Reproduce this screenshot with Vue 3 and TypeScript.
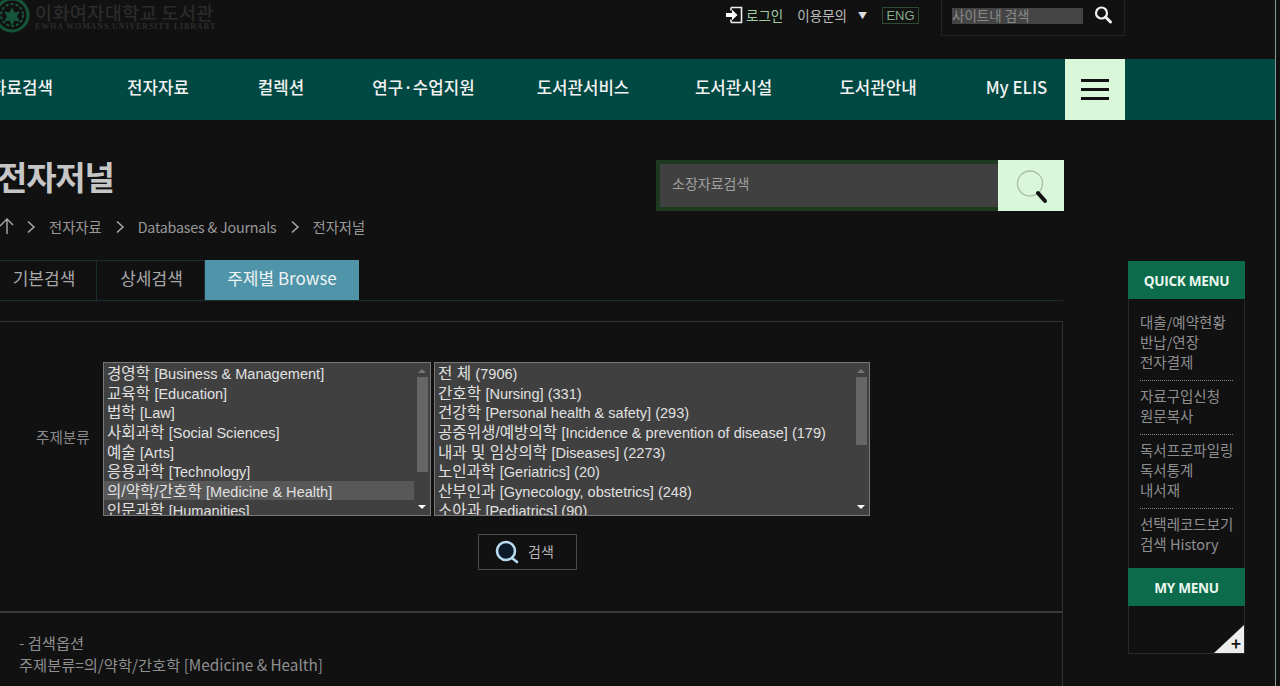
<script setup lang="ts">
const navItems: string[] = ['자료검색', '전자자료', '컬렉션', '연구·수업지원', '도서관서비스', '도서관시설', '도서관안내', 'My ELIS']
const subjects: string[] = ['경영학 [Business & Management]', '교육학 [Education]', '법학 [Law]', '사회과학 [Social Sciences]', '예술 [Arts]', '응용과학 [Technology]', '의/약학/간호학 [Medicine & Health]', '인문과학 [Humanities]']
const details: string[] = ['전 체 (7906)', '간호학 [Nursing] (331)', '건강학 [Personal health & safety] (293)', '공중위생/예방의학 [Incidence & prevention of disease] (179)', '내과 및 임상의학 [Diseases] (2273)', '노인과학 [Geriatrics] (20)', '산부인과 [Gynecology, obstetrics] (248)', '소아과 [Pediatrics] (90)']
const quickGroups: string[][] = [['대출/예약현황', '반납/연장', '전자결제'], ['자료구입신청', '원문복사'], ['독서프로파일링', '독서통계', '내서재'], ['선택레코드보기', '검색 History']]
function ko(s: string): string {
  return s.slice(0, s.search(/[\[(]/))
}
function latin(s: string): string {
  return s.slice(s.search(/[\[(]/))
}
</script>

<template>
  <div class="viewport">
    <div class="page">
      <header class="topbar">
        <div class="logo">
          <svg class="logo-mark" width="36" height="36" viewBox="0 0 36 36">
            <circle cx="18" cy="18" r="16" fill="none" stroke="#17553b" stroke-width="3" />
            <circle cx="18" cy="18" r="11" fill="none" stroke="#17553b" stroke-width="2" stroke-dasharray="3 2" />
            <path d="M18 10l2.500 5.500 5.500-1-3 5 3 5-5.500-1-2.500 5.500-2.500-5.500-5.500 1 3-5-3-5 5.500 1z" fill="#17553b" />
          </svg>
          <div class="logo-text">
            <div class="logo-ko">이화여자대학교 도서관</div>
            <div class="logo-en">EWHA WOMANS UNIVERSITY LIBRARY</div>
          </div>
        </div>
        <div class="util">
          <svg class="login-icon" width="18" height="18" viewBox="0 0 18 18">
            <path d="M6 1.500h10.500v15H6M6 1.500v3M6 16.500v-3" fill="none" stroke="#eee" stroke-width="1.600" />
            <path d="M1 7h6V3.800L12.500 9 7 14.200V11H1z" fill="#fff" />
          </svg>
          <span class="login">로그인</span>
          <span class="inquiry">이용문의</span>
          <span class="caret">▼</span>
          <span class="eng">ENG</span>
        </div>
        <div class="site-search">
          <div class="site-input">사이트내 검색</div>
          <svg width="20" height="20" viewBox="0 0 20 20">
            <circle cx="8.500" cy="8" r="5.500" fill="none" stroke="#f0f0f0" stroke-width="2.200" />
            <path d="M12.500 12l5 5" stroke="#f0f0f0" stroke-width="3" stroke-linecap="round" />
          </svg>
        </div>
      </header>

      <nav class="nav">
        <div class="nav-grid">
          <a v-for="item in navItems" :key="item" class="nav-item">{{ item }}</a>
          <div class="burger"><i></i><i></i><i></i></div>
        </div>
      </nav>

      <div class="body">
        <main class="content">
          <div class="head">
            <div>
              <h1 class="title">전자저널</h1>
              <div class="crumbs">
                <svg class="home" width="18" height="18" viewBox="0 0 18 18"><path d="M2 8l7-7 6 6M9 1.500V16" fill="none" stroke="#aaa" stroke-width="1.400" /></svg>
                <svg class="chev" width="10" height="14" viewBox="0 0 10 14"><path d="M2 1.500l6 5.500-6 5.500" fill="none" stroke="#aaa" stroke-width="1.500" /></svg>
                <span>전자자료</span>
                <svg class="chev" width="10" height="14" viewBox="0 0 10 14"><path d="M2 1.500l6 5.500-6 5.500" fill="none" stroke="#aaa" stroke-width="1.500" /></svg>
                <span class="crumb-latin">Databases &amp; Journals</span>
                <svg class="chev" width="10" height="14" viewBox="0 0 10 14"><path d="M2 1.500l6 5.500-6 5.500" fill="none" stroke="#aaa" stroke-width="1.500" /></svg>
                <span>전자저널</span>
              </div>
            </div>
            <div class="holdings">
              <div class="holdings-input">소장자료검색</div>
              <div class="holdings-btn">
                <svg width="38" height="38" viewBox="0 0 38 38">
                  <circle cx="18" cy="16.500" r="12.500" fill="none" stroke="#a9bba9" stroke-width="1.300" />
                  <path d="M26 26l7 8" stroke="#111" stroke-width="4" stroke-linecap="round" />
                </svg>
              </div>
            </div>
          </div>

          <div class="tabs">
            <div class="tab tab-first">기본검색</div>
            <div class="tab tab-second">상세검색</div>
            <div class="tab tab-active">주제별 Browse</div>
          </div>

          <section class="panel">
            <div class="form-row">
              <label class="form-label">주제분류</label>
              <div class="listbox listbox-left">
                <ul class="options">
                  <li v-for="s in subjects" :key="s" :class="{ selected: s.startsWith('의/약학') }"><span class="opt-ko">{{ ko(s) }}</span>{{ latin(s) }}</li>
                </ul>
                <div class="scroll">
                  <b class="arrow up dim"></b>
                  <b class="thumb thumb-left"></b>
                  <b class="arrow down"></b>
                </div>
              </div>
              <div class="listbox listbox-right">
                <ul class="options">
                  <li v-for="d in details" :key="d"><span class="opt-ko">{{ ko(d) }}</span>{{ latin(d) }}</li>
                </ul>
                <div class="scroll">
                  <b class="arrow up dim"></b>
                  <b class="thumb thumb-right"></b>
                  <b class="arrow down"></b>
                </div>
              </div>
            </div>
            <div class="btn-row">
              <button class="search-btn" type="button">
                <svg width="26" height="26" viewBox="0 0 26 26">
                  <circle cx="12" cy="12" r="9" fill="#0c1a2a" stroke="#b8dcf2" stroke-width="2.600" />
                  <path d="M18 19l5 4" stroke="#b8dcf2" stroke-width="2.600" stroke-linecap="round" />
                </svg>
                <span class="search-label">검색</span>
              </button>
            </div>
            <div class="options-info">
              <div>- 검색옵션</div>
              <div class="options-value">주제분류=의/약학/간호학 [Medicine &amp; Health]</div>
            </div>
          </section>
        </main>

        <aside class="quick">
          <div class="quick-head">QUICK MENU</div>
          <div class="quick-list">
            <ul v-for="(g, i) in quickGroups" :key="i" class="quick-group">
              <li v-for="q in g" :key="q">{{ q }}</li>
            </ul>
          </div>
          <div class="quick-head my">MY MENU</div>
          <div class="my-body">
            <div class="corner"><span>+</span></div>
          </div>
        </aside>
      </div>
    </div>
  </div>
</template>

<style>
html, body { margin: 0; background: #111112; }
</style>

<style scoped>
* { box-sizing: border-box; }
.viewport {
  width: 1276px;
  height: 686px;
  overflow: hidden;
  background: #111112;
  border-right: 1px solid #8a9a9a;
  font-family: "Noto Sans CJK KR", "Noto Sans", sans-serif;
  color: #aaa;
}
.page { margin-left: -70px; width: 1345px; }

.topbar { height: 59px; width: 1195px; display: flex; align-items: flex-start; }
.logo { display: flex; margin-left: 64px; margin-top: -3px; height: 36px; }
.logo-mark { flex: none; }
.logo-text { margin-left: 5px; margin-top: 5px; }
.logo-ko { font-size: 18.500px; line-height: 20px; font-weight: 500; color: #2b2b2b; letter-spacing: 0.400px; white-space: nowrap; }
.logo-en { font-family: "Liberation Serif", serif; font-size: 8px; line-height: 9px; font-weight: 700; color: #2d2d2d; letter-spacing: 0.880px; white-space: nowrap; }
.util { display: flex; align-items: center; height: 18px; margin-top: 6px; margin-left: auto; font-size: 13.500px; }
.login-icon { margin-right: 3px; }
.login { color: #a2cba2; }
.inquiry { margin-left: 14px; color: #bbb; }
.caret { margin-left: 11px; font-size: 9px; color: #ddd; }
.eng { margin-left: 15px; border: 1px solid #2f4a33; color: #86ac8a; font-size: 13px; line-height: 15px; padding: 0 3px; width: 37px; text-align: center; font-family: "Liberation Sans", sans-serif; }
.site-search { width: 184px; height: 36px; margin-left: 22px; border: 1px solid #242424; border-top: 0; display: flex; align-items: flex-start; padding: 8px 0 0 10px; gap: 10px; }
.site-input { width: 131px; height: 16px; background: #444; color: #8a8a8a; font-size: 13.500px; line-height: 14px; white-space: nowrap; }
.site-search svg { margin-top: -3px; }

.nav { height: 61px; background: #004842; }
.nav-grid { width: 1195px; height: 61px; display: grid; grid-template-columns: 184px 88px 158px 127px 192px 109px 180px 97px 60px; align-items: center; }
.nav-item { text-align: center; color: #f2f2f2; font-size: 16.800px; line-height: 24px; font-weight: 500; white-space: nowrap; padding-bottom: 6px; }
.burger { height: 61px; background: #d9f7d9; display: flex; flex-direction: column; justify-content: center; align-items: center; gap: 6px; }
.burger i { display: block; width: 28px; height: 3px; background: #111; }

.body { display: flex; align-items: flex-start; }
.content { width: 1133px; flex: none; }
.head { display: flex; justify-content: space-between; padding-left: 67px; padding-top: 40px; height: 140px; }
.title { margin: -2px 0 0; font-size: 33px; line-height: 36px; font-weight: 700; color: #c6c6c6; letter-spacing: -1.200px; }
.crumbs { display: flex; align-items: center; margin-top: 23px; margin-left: 1px; font-size: 14.300px; line-height: 20px; color: #999; height: 20px; white-space: nowrap; }
.home { flex: none; }
.chev { margin: 0 13px 0 10px; flex: none; }
.crumbs span + .chev { margin: 0 13px 0 13px; }
.crumb-latin { letter-spacing: -0.200px; }
.holdings { display: flex; height: 51px; width: 408px; margin-right: -1px; }
.holdings-input { flex: 1; border: 4px solid #1d3a20; border-right: 0; background: #404040; color: #a0a0a0; font-size: 14px; line-height: 39px; padding-left: 12px; }
.holdings-btn { width: 66px; background: #d9f7d9; display: flex; align-items: center; justify-content: center; }

.tabs { display: flex; height: 41px; border-bottom: 1px solid #1c2c30; }
.tab { height: 40px; font-size: 17px; line-height: 34px; text-align: center; color: #a8a8a8; border-top: 1px solid #1c2c30; white-space: nowrap; }
.tab-first { width: 167px; padding-left: 62px; border-right: 1px solid #1c2c30; }
.tab-second { width: 108px; padding-left: 2px; border-right: 1px solid #1c2c30; }
.tab-active { width: 154px; background: #4f94a8; color: #eef3f5; border-color: #4f94a8; }

.panel { margin-top: 20px; border-top: 1px solid #333; border-right: 1px solid #333; height: 400px; }
.form-row { display: flex; align-items: center; padding-top: 40px; padding-left: 106px; }
.form-label { width: 67px; font-size: 14.600px; color: #8c8c8c; padding-bottom: 5px; white-space: nowrap; }
.listbox { height: 154px; background: #404040; border: 1px solid #777; display: flex; overflow: hidden; font-family: "Liberation Sans", "Noto Sans CJK KR", sans-serif; font-size: 14.550px; color: #e0e0e0; }
.listbox-left { width: 328px; }
.listbox-right { width: 436px; margin-left: 3px; }
.options { list-style: none; margin: 0; padding: 0; flex: 1; min-width: 0; }
.options li { height: 19.640px; line-height: 17.640px; padding: 2px 0 0 3px; white-space: nowrap; }
.options li.selected { background: #585858; }
.opt-ko { font-size: 15.600px; }
.scroll { width: 16px; flex: none; display: flex; flex-direction: column; align-items: center; position: relative; }
.arrow { width: 0; height: 0; border-left: 4px solid transparent; border-right: 4px solid transparent; position: absolute; }
.arrow.up { top: 6px; border-bottom: 4px solid #fff; }
.arrow.up.dim { border-bottom-color: #777; }
.arrow.down { bottom: 6px; border-top: 4px solid #fff; }
.thumb { width: 11px; background: #666; margin-top: 14px; display: block; }
.thumb-left { height: 95px; }
.thumb-right { height: 68px; }

.btn-row { padding-left: 548px; margin-top: 18px; }
.search-btn { width: 99px; height: 36px; background: #111112; border: 1px solid #4a4a4a; display: flex; align-items: center; padding: 0 0 0 15px; gap: 8px; color: #b5b5b5; font-family: inherit; font-size: 14px; }
.search-label { padding-bottom: 2px; }
.options-info { margin-top: 41px; border-top: 2px solid #3a3a3a; padding: 18px 0 0 89px; font-size: 15.300px; line-height: 22px; color: #8f8f8f; }
.options-value { white-space: nowrap; }

.quick { width: 117px; margin-left: 65px; margin-top: 141px; border-left: 1px solid #2a2a2a; border-right: 1px solid #2a2a2a; border-bottom: 1px solid #2a2a2a; font-size: 14.500px; color: #8e8e8e; }
.quick-head { height: 38px; margin: 0 -1px; background: #0b6b4a; color: #eaf6ee; text-align: center; font-family: "Open Sans", sans-serif; font-weight: 700; font-size: 13.600px; line-height: 39px; letter-spacing: -0.300px; }
.quick-list { padding: 13px 11px 14px; }
.quick-group { list-style: none; margin: 0; padding: 0 0 8px; border-bottom: 1px dotted #888; }
.quick-group + .quick-group { padding-top: 5px; }
.quick-group:last-child { border-bottom: 0; padding-bottom: 0; }
.quick-group li { line-height: 20px; white-space: nowrap; }
.my-body { height: 47px; position: relative; }
.corner { position: absolute; right: 0; bottom: 0; width: 30px; height: 28px; background: #ededed; clip-path: polygon(100% 0, 100% 100%, 0 100%); }
.corner span { position: absolute; right: 3px; bottom: 2px; color: #111; font-size: 17px; line-height: 16px; font-weight: 700; }
</style>
